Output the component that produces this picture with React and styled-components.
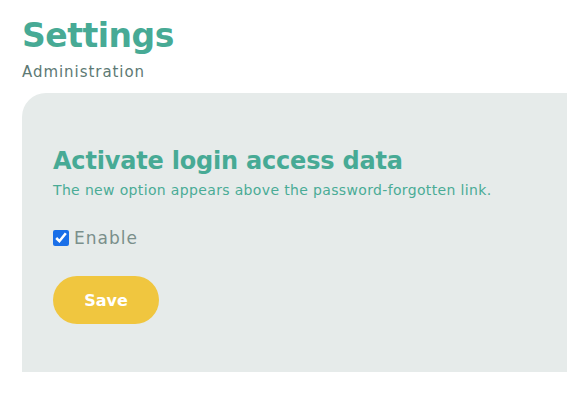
import React from 'react';
import styled, { createGlobalStyle } from 'styled-components';

const GlobalStyle = createGlobalStyle`
 body {
  margin: 0;
  background: #ffffff;
  font-family: "DejaVu Sans", "Open Sans", sans-serif;
  overflow: hidden;
 }
`

const Page = styled.div`
 padding: 14px 0 0 22px;
`

const Title = styled.h1`
 margin: 0;
 font-size: 33px;
 line-height: 44px;
 font-weight: bold;
 color: #47aa95;
 letter-spacing: -0.5px;
`

const Subtitle = styled.div`
 font-size: 15px;
 line-height: 20px;
 color: #5d7974;
 letter-spacing: 0.95px;
 margin-top: 4px;
`

const Panel = styled.section`
 margin-top: 11px;
 background: #e6ebea;
 border-top-left-radius: 24px;
 height: 279px;
 padding: 52px 31px 0;
 box-sizing: border-box;
`

const PanelTitle = styled.h2`
 margin: 0;
 font-size: 24px;
 line-height: 32px;
 font-weight: bold;
 color: #47aa95;
 letter-spacing: -0.2px;
`

const Hint = styled.p`
 margin: 4px 0 0;
 font-size: 14px;
 line-height: 18px;
 color: #4aab96;
 letter-spacing: 0.35px;
`

const CheckRow = styled.label`
 display: flex;
 align-items: center;
 gap: 5px;
 margin-top: 29px;
 font-size: 17px;
 color: #7a8f8b;
 letter-spacing: 1px;
`

const Check = styled.input`
 width: 16px;
 height: 16px;
 margin: 0;
 accent-color: #1a6fe8;
`

const SaveButton = styled.button`
 margin-top: 28px;
 width: 106px;
 height: 48px;
 border: none;
 border-radius: 24px;
 background: #f0c63f;
 color: #ffffff;
 font-family: inherit;
 font-size: 16px;
 font-weight: bold;
 cursor: pointer;
`

export default function App() {
 return (
  <>
   <GlobalStyle />
   <Page>
    <Title>Settings</Title>
    <Subtitle>Administration</Subtitle>
    <Panel>
     <PanelTitle>Activate login access data</PanelTitle>
     <Hint>The new option appears above the password-forgotten link.</Hint>
     <CheckRow>
      <Check type="checkbox" defaultChecked />
      Enable
     </CheckRow>
     <SaveButton>Save</SaveButton>
    </Panel>
   </Page>
  </>
 )
}
